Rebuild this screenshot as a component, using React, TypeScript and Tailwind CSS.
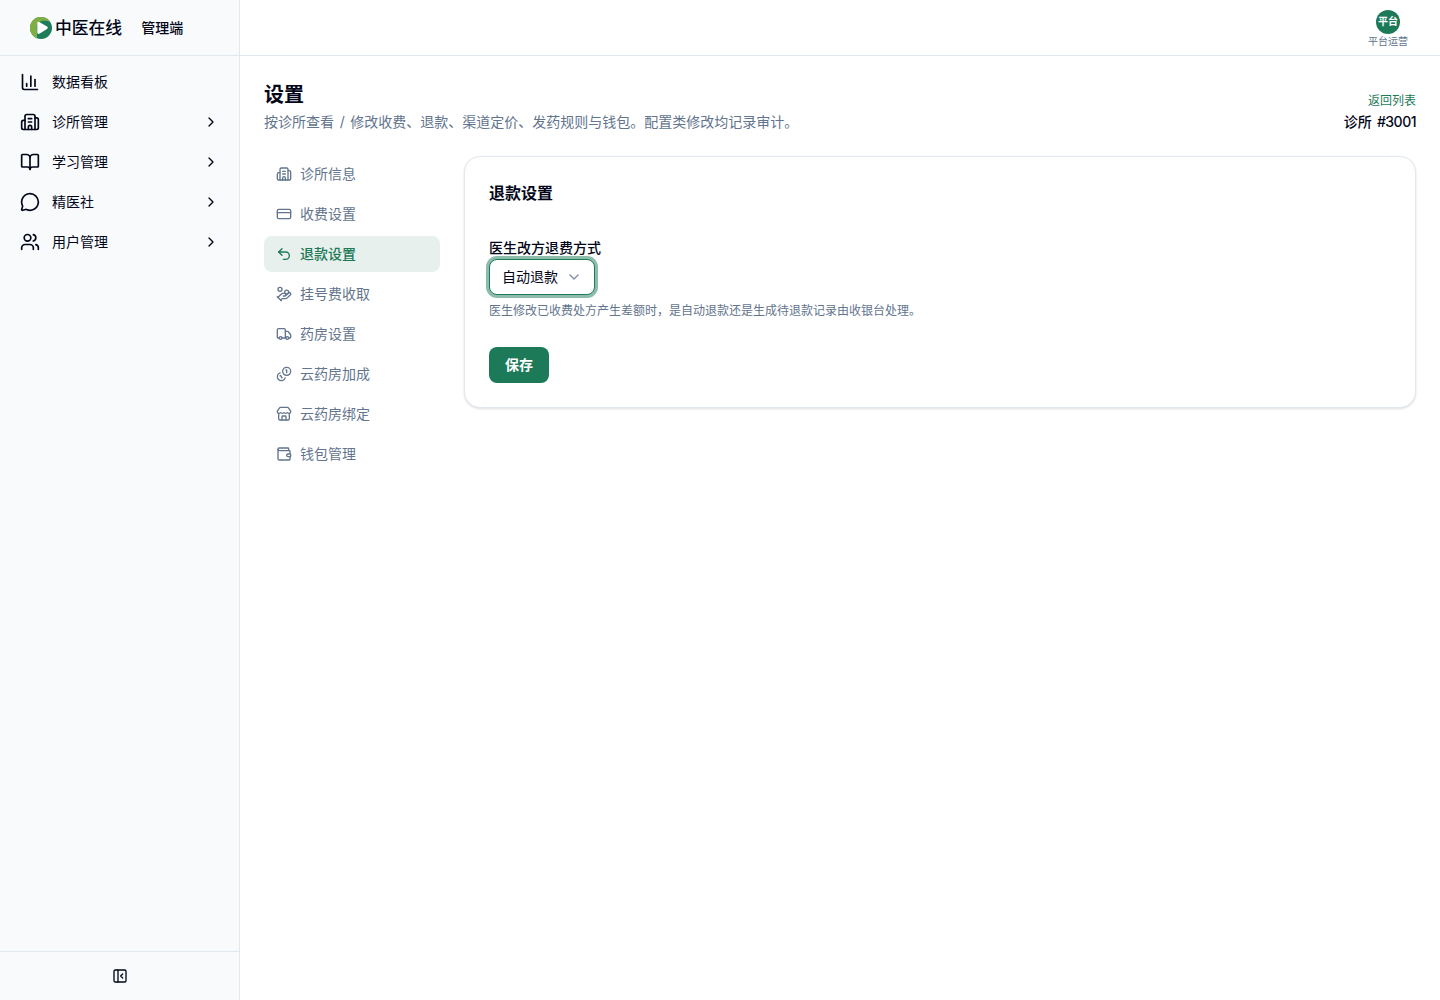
import {
    BookOpen,
    Building2,
    ChartColumn,
    ChevronDown,
    ChevronRight,
    CreditCard,
    HandCoins,
    MessageCircle,
    PanelLeftClose,
    Store,
    Truck,
    Undo2,
    Users,
    Wallet,
} from "lucide-react";

// two coins, the larger one on the top right
function CoinsIcon({ className }: { className?: string }) {
    return (
        <svg
            viewBox="0 0 24 24"
            fill="none"
            stroke="currentColor"
            strokeWidth="2"
            strokeLinecap="round"
            strokeLinejoin="round"
            className={className}
        >
            <path d="M13.744 17.736a6 6 0 1 1-7.48-7.48" />
            <path d="M15 6h1v4" />
            <path d="m6.134 14.768.866-.5 2 3.464" />
            <circle cx="16" cy="8" r="6" />
        </svg>
    );
}

const menu = [
    { label: "数据看板", icon: ChartColumn, children: false },
    { label: "诊所管理", icon: Building2, children: true },
    { label: "学习管理", icon: BookOpen, children: true },
    { label: "精医社", icon: MessageCircle, children: true },
    { label: "用户管理", icon: Users, children: true },
];

const tabs = [
    { label: "诊所信息", icon: Building2 },
    { label: "收费设置", icon: CreditCard },
    { label: "退款设置", icon: Undo2 },
    { label: "挂号费收取", icon: HandCoins },
    { label: "药房设置", icon: Truck },
    { label: "云药房加成", icon: CoinsIcon },
    { label: "云药房绑定", icon: Store },
    { label: "钱包管理", icon: Wallet },
];

function Logo() {
    return (
        <div className="flex items-center gap-[3px]">
            <svg viewBox="0 0 22 22" className="size-[22px]">
                <circle cx="11" cy="11" r="11" fill="#1d7d5a" />
                <path d="M7 21.2A11 11 0 1 1 20.2 5C17 3.2 11 3 8.500 5.500C5.500 8.500 7.500 14 7 21.200Z" fill="#7fae45" />
                <path d="M7.300 6.200c0-1.200 1-1.700 2-1.200l7.700 4.600c1 .6 1 1.700 0 2.300l-7.700 4.900c-1 .6-2 0-2-1.200z" fill="#fff" />
            </svg>
            <span className="text-[16.8px] font-medium leading-6">中医在线</span>
        </div>
    );
}

function Sidebar() {
    return (
        <aside className="flex w-60 shrink-0 flex-col border-r border-slate-200 bg-slate-50">
            <div className="flex h-14 items-center border-b border-slate-200 pl-[30px]">
                <Logo />
                <span className="ml-[19px] text-sm font-medium">管理端</span>
            </div>
            <nav className="flex flex-1 flex-col gap-1 p-2">
                {menu.map(({ label, icon: Icon, children }) => (
                    <a key={label} className="flex h-9 items-center gap-3 rounded-md px-3 text-sm">
                        <Icon className="size-5" />
                        <span className="flex-1">{label}</span>
                        {children && <ChevronRight className="size-4" />}
                    </a>
                ))}
            </nav>
            <div className="flex h-[49px] items-center justify-center border-t border-slate-200">
                <PanelLeftClose className="size-4" />
            </div>
        </aside>
    );
}

function Topbar() {
    return (
        <header className="flex h-14 shrink-0 items-center justify-end border-b border-slate-200 pr-8">
            <div className="flex flex-col items-center gap-px pt-px">
                <span className="flex size-6 items-center justify-center rounded-full bg-[#1d7a58] text-[10px] font-semibold text-white">平台</span>
                <span className="text-[10px] leading-3 text-slate-500">平台运营</span>
            </div>
        </header>
    );
}

function SettingsNav() {
    return (
        <nav className="flex w-44 shrink-0 flex-col gap-1">
            {tabs.map(({ label, icon: Icon }) => (
                <a
                    key={label}
                    className={
                        label === "退款设置"
                            ? "flex h-9 items-center gap-2 rounded-lg bg-[#e8f0ed] px-3 text-sm font-medium text-[#1d7a58]"
                            : "flex h-9 items-center gap-2 rounded-lg px-3 text-sm text-slate-500"
                    }
                >
                    <Icon className="size-4" />
                    {label}
                </a>
            ))}
        </nav>
    );
}

function RefundCard() {
    return (
        <section className="flex h-[252px] flex-1 flex-col items-start rounded-2xl border border-slate-200 bg-white p-6 shadow-sm">
            <h2 className="text-base font-semibold">退款设置</h2>
            <label className="mt-8 mb-px text-sm leading-[21px] font-medium">医生改方退费方式</label>
            <button className="flex h-9 w-[106px] items-center justify-between rounded-lg border border-[#1d7a58] bg-white px-3 text-sm ring-3 ring-[#1d7a58]/50">
                自动退款
                <ChevronDown className="size-4 text-slate-500/80" />
            </button>
            <p className="mt-2 text-xs text-slate-500">医生修改已收费处方产生差额时，是自动退款还是生成待退款记录由收银台处理。</p>
            <button className="mt-7 h-9 rounded-lg bg-[#1d7a58] px-4 text-sm font-semibold text-white">保存</button>
        </section>
    );
}

export default function App() {
    return (
        <div className="flex h-screen bg-white font-['Inter','Noto_Sans_CJK_SC',sans-serif] text-slate-950">
            <Sidebar />
            <div className="flex flex-1 flex-col">
                <Topbar />
                <main className="flex flex-col p-6">
                    <div className="flex h-[52px] items-end justify-between">
                        <div>
                            <h1 className="mb-[3px] text-xl font-semibold">设置</h1>
                            <p className="text-sm text-slate-500 [word-spacing:1.7px]">按诊所查看 / 修改收费、退款、渠道定价、发药规则与钱包。配置类修改均记录审计。</p>
                        </div>
                        <div className="flex flex-col items-end gap-[3px]">
                            <a className="text-xs text-[#1d7a58]">返回列表</a>
                            <span className="text-sm font-medium [word-spacing:1.5px]">
                                诊所 <span className="tracking-[-0.5px]">#3001</span>
                            </span>
                        </div>
                    </div>
                    <div className="mt-6 flex items-start gap-6">
                        <SettingsNav />
                        <RefundCard />
                    </div>
                </main>
            </div>
        </div>
    );
}
